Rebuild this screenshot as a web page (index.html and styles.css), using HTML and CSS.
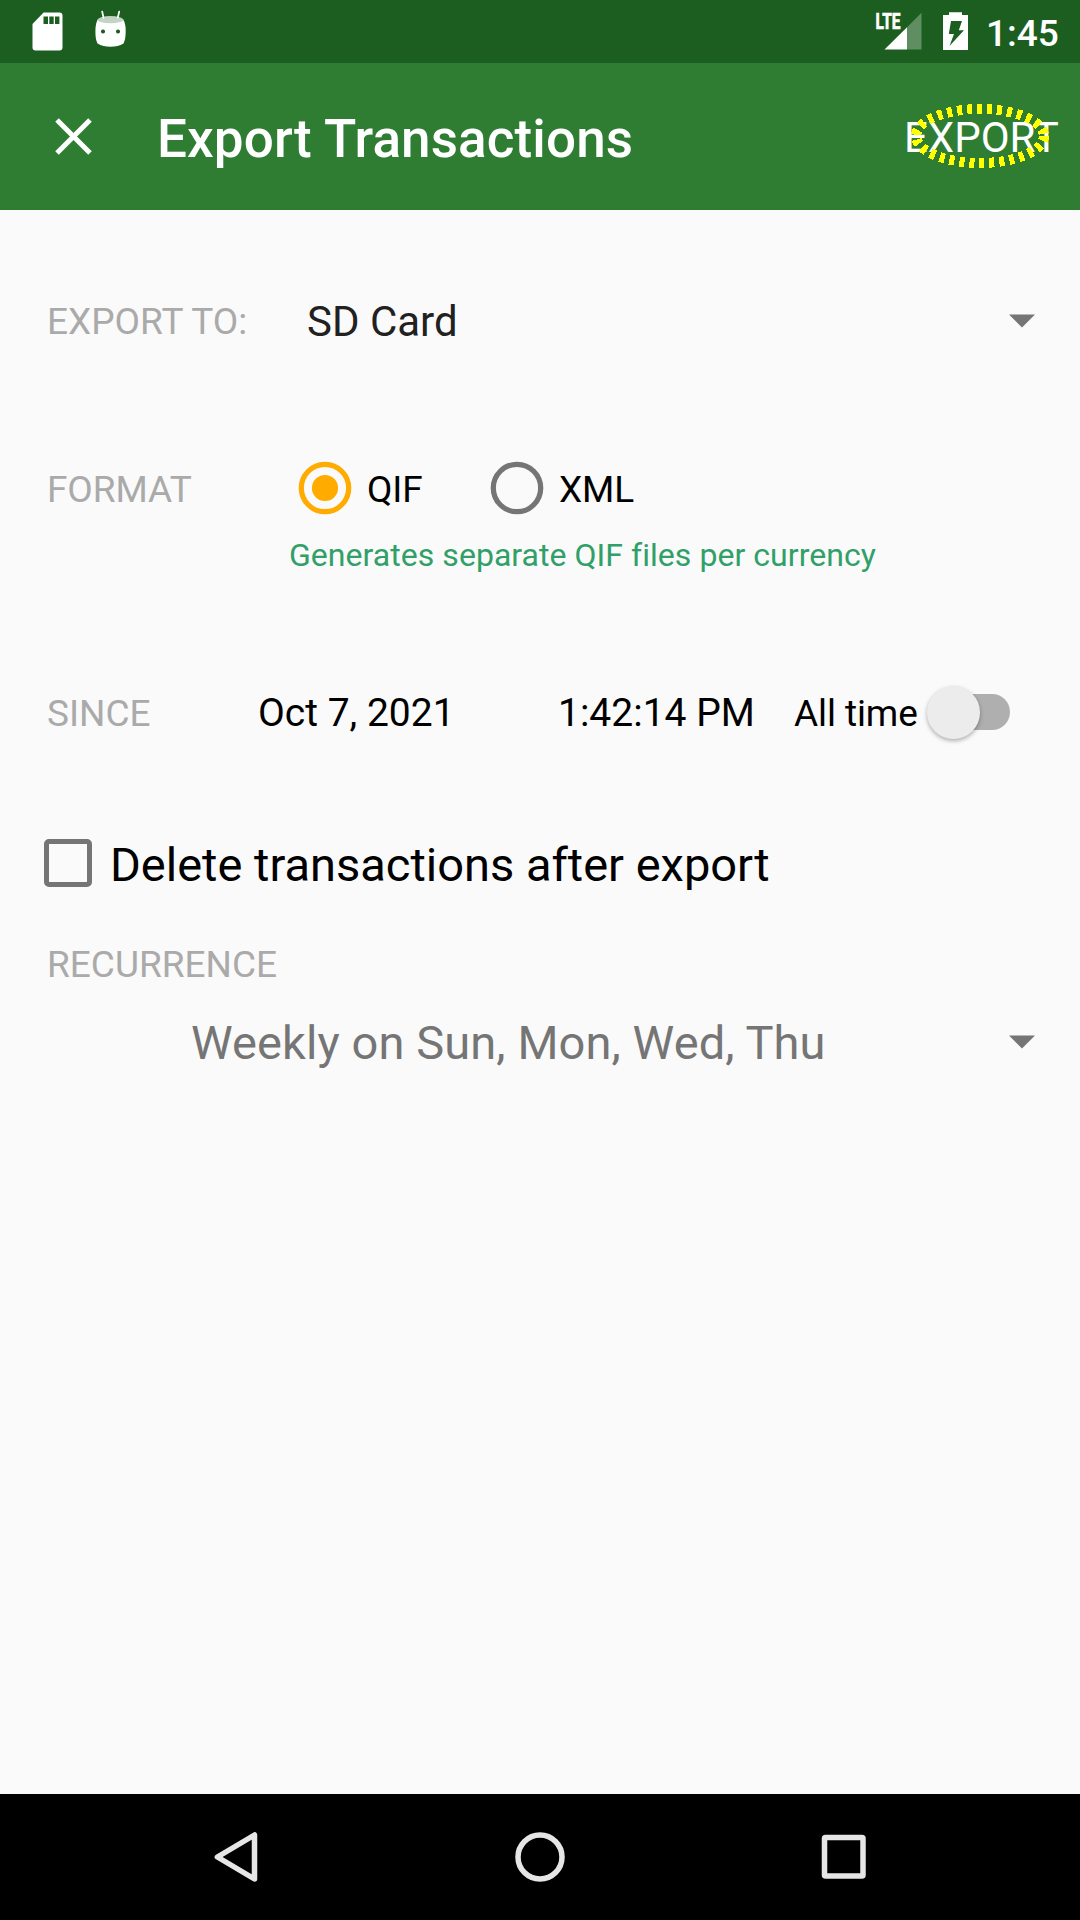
FILE: index.html
```html
<!DOCTYPE html>
<html lang="en">
<head>
<meta charset="utf-8">
<title>Export Transactions</title>
<link rel="stylesheet" href="styles.css">
</head>
<body>
<div class="screen">
  <div class="status-bar">
    <svg class="status-left" width="140" height="63" viewBox="0 0 140 63">
      <path fill="#fff" fill-rule="evenodd" d="M43.6 12.5H59.5a3 3 0 0 1 3 3v32a3 3 0 0 1-3 3h-24a3 3 0 0 1-3-3V24zM43.5 16.500V24H48v-7.500zM49.300 16.500V24h4.400v-7.500zM55 16.500V24h4.400v-7.500z"/>
      <path fill="#fff" fill-rule="evenodd" d="M98 19Q110.500 27 123 19Q126 24 125.700 32Q125.500 40 123.500 43.500Q118 46.700 110.500 46.700T97.500 43.500Q95.500 40 95.400 32Q95.300 23 98 19zM103 29.400a2.100 2.100 0 1 0 .01 0zM118 29.400a2.100 2.100 0 1 0 .01 0z"/>
      <ellipse cx="110.500" cy="19.700" rx="12.700" ry="3.600" fill="#c2d5c3"/>
      <path stroke="#fff" stroke-width="1.800" stroke-linecap="round" d="M102.200 11.600l1.300 6M119.200 11.600l-1.400 6"/>
    </svg>
    <div class="status-right">
      <svg width="100" height="63" viewBox="872 0 100 63">
        <text class="lte" x="875.500" y="29" textLength="25" lengthAdjust="spacingAndGlyphs">LTE</text>
        <path fill="#fff" fill-opacity=".3" d="M907 27.300L921.500 12.800V49.500H907z"/>
        <path fill="#fff" d="M884.500 49.500L907 27.300V49.500z"/>
        <path fill="#fff" fill-rule="evenodd" d="M949 12.200h13V15h6v35h-25V15h6zM951 21l-2.200 13h5.200l-4.500 12L964 30.200h-5.200L962 21z"/>
      </svg>
      <span class="clock">1:45</span>
    </div>
  </div>

  <header class="toolbar">
    <svg class="close" width="37" height="37" viewBox="0 0 37 37">
      <path d="M2 2L35 35M35 2L2 35" stroke="#fff" stroke-width="5"/>
    </svg>
    <h1 class="title">Export Transactions</h1>
    <div class="action">EXPORT
      <svg class="highlight" width="140" height="66" viewBox="0 0 140 66">
        <ellipse cx="70" cy="33" rx="64" ry="27" fill="none" stroke="#ff0" stroke-width="10" stroke-dasharray="5 5" shape-rendering="crispEdges"/>
      </svg>
    </div>
  </header>

  <main class="form">
    <div class="row row-target">
      <span class="label label-target">EXPORT TO:</span>
      <span class="target">SD Card</span>
      <svg class="caret" width="26" height="14" viewBox="0 0 26 14"><path d="M0 .5H26L13 13.500z"/></svg>
    </div>
    <div class="row row-format">
      <span class="label label-format">FORMAT</span>
      <svg class="radio" width="54" height="54" viewBox="0 0 54 54"><circle class="ring ring-on" cx="27" cy="27" r="23.700"/><circle class="dot" cx="27" cy="27" r="13.100"/></svg>
      <span class="option option-qif">QIF</span>
      <svg class="radio" width="54" height="54" viewBox="0 0 54 54"><circle class="ring" cx="27" cy="27" r="23.700"/></svg>
      <span class="option">XML</span>
    </div>
    <p class="hint">Generates separate QIF files per currency</p>
    <div class="row row-since">
      <span class="label label-since">SINCE</span>
      <span class="date">Oct 7, 2021</span>
      <span class="time">1:42:14 PM</span>
      <span class="all-time">All time</span>
      <div class="switch"><div class="thumb"></div></div>
    </div>
    <div class="row row-delete">
      <span class="checkbox"></span>
      <span class="delete-text">Delete transactions after export</span>
    </div>
    <div class="label label-recurrence">RECURRENCE</div>
    <div class="row row-recurrence">
      <span class="recurrence">Weekly on Sun, Mon, Wed, Thu</span>
      <svg class="caret" width="26" height="14" viewBox="0 0 26 14"><path d="M0 .5H26L13 13.500z"/></svg>
    </div>
  </main>

  <nav class="nav-bar">
    <svg width="60" height="60" viewBox="0 0 60 60"><path d="M48.500 8V52L11.400 30z"/></svg>
    <svg width="60" height="60" viewBox="0 0 60 60"><circle cx="30" cy="30" r="22"/></svg>
    <svg width="60" height="60" viewBox="0 0 60 60"><rect x="10.500" y="10.500" width="38.500" height="38.500" rx="1"/></svg>
  </nav>
</div>
</body>
</html>
```
FILE: styles.css
```css
* { box-sizing: border-box; }
body { margin: 0; font-family: Roboto, sans-serif; }
svg { display: block; flex: none; }

.screen {
  width: 1080px;
  height: 1920px;
  display: flex;
  flex-direction: column;
  background: #fafafa;
  overflow: hidden;
}

.status-bar {
  height: 63px;
  flex: none;
  display: flex;
  justify-content: space-between;
  background: #1b5e20;
  color: #fff;
}
.status-right { display: flex; width: 208px; }
.lte { font-weight: 700; font-size: 22px; fill: #fff; stroke: #fff; stroke-width: .7; }
.clock {
  margin-left: 14px;
  font-size: 37px;
  font-weight: 500;
  line-height: 67px;
}

.toolbar {
  height: 147px;
  flex: none;
  display: flex;
  align-items: center;
  padding-left: 55px;
  background: #2e7d32;
  color: #fff;
}
.title {
  margin: 5px 0 0 65px;
  font-size: 53px;
  font-weight: 500;
  line-height: 62px;
  letter-spacing: .12px;
  white-space: nowrap;
}
.action {
  position: relative;
  width: 176px;
  margin-left: auto;
  font-size: 42px;
  line-height: 50px;
  margin-top: 2px;
}
.highlight { position: absolute; left: 6px; top: -10px; }

.form { flex: 1; display: flex; flex-direction: column; }
.row { display: flex; align-items: center; flex: none; white-space: nowrap; }
.label { font-size: 37px; line-height: 44px; color: #aaa; padding-left: 47px; }
.caret { fill: #757575; margin-left: auto; margin-right: 45px; }

.row-target { height: 110px; margin-top: 56px; }
.label-target { width: 307px; padding-top: 1px; }
.target { font-size: 42px; color: #212121; }

.row-format { height: 60px; margin-top: 82px; }
.label-format { width: 298px; padding-top: 3px; letter-spacing: -.1px; }
.option { font-size: 37px; line-height: 44px; padding: 3px 0 0 15px; letter-spacing: -.1px; }
.option-qif { width: 138px; }
.ring { fill: none; stroke: #757575; stroke-width: 5.25; }
.ring-on { stroke: #ffab00; }
.dot { fill: #ffab00; }

.hint {
  margin: 17px 0 0 289px;
  font-size: 32px;
  line-height: 40px;
  letter-spacing: .04px;
  color: #30a068;
}

.row-since { height: 80px; margin-top: 97px; }
.label-since { width: 258px; padding-top: 3px; }
.date { width: 300px; font-size: 39px; padding-top: 2px; }
.time { width: 236px; font-size: 39px; padding-top: 2px; }
.all-time { width: 146px; font-size: 37px; padding-top: 2px; letter-spacing: -.1px; }
.switch {
  width: 70px;
  height: 36px;
  border-radius: 18px;
  background: #afafaf;
  display: flex;
  align-items: center;
}
.thumb {
  flex: none;
  width: 53px;
  height: 53px;
  margin-left: -13px;
  border-radius: 50%;
  background: #ececec;
  box-shadow: 0 2px 4px rgba(0, 0, 0, .3);
}

.row-delete { height: 80px; margin-top: 71px; padding-left: 44px; }
.checkbox {
  width: 48px;
  height: 48px;
  border: 5px solid #757575;
  border-radius: 5px;
}
.delete-text { font-size: 47px; line-height: 56px; padding: 4px 0 0 18px; }

.label-recurrence { margin-top: 40px; }
.row-recurrence { height: 80px; margin-top: 15px; }
.recurrence { font-size: 47px; letter-spacing: .09px; color: #757575; padding: 1px 0 0 191px; }

.nav-bar {
  height: 126px;
  flex: none;
  display: grid;
  grid-template-columns: 60px 60px 60px;
  gap: 244px;
  justify-content: center;
  align-items: center;
  background: #000;
}
.nav-bar svg { fill: none; stroke: #e6e6e6; stroke-width: 5.5; stroke-linejoin: round; }
```
